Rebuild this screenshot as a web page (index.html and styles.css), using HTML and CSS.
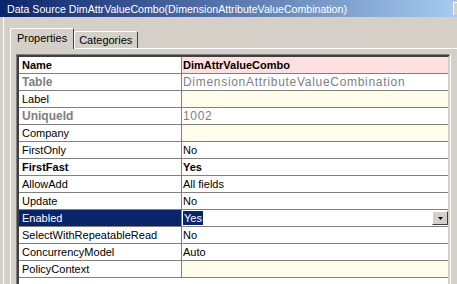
FILE: index.html
```html
<!DOCTYPE html>
<html lang="en">
<head>
    <meta charset="UTF-8">
    <title>Data Source DimAttrValueCombo</title>
    <link rel="stylesheet" href="styles.css">
</head>
<body>
    <div class="window">
        <div class="titlebar">
            <span class="title">Data Source DimAttrValueCombo(DimensionAttributeValueCombination)</span>
            <span class="close">
                <svg width="8" height="7" viewBox="0 0 8 7"><path d="M0 0h2l2 2 2-2h2L5 3.5 8 7H6L4 5 2 7H0l3-3.5z" fill="#000"/></svg>
            </span>
        </div>

        <div class="content">
            <div class="tabs">
                <div class="tab active">Properties</div>
                <div class="tab">Categories</div>
            </div>

            <div class="panel">
                <div class="grid">
                    <div class="row"><div class="name bold">Name</div><div class="value bold pink">DimAttrValueCombo</div></div>
                    <div class="row"><div class="name bold muted">Table</div><div class="value muted">DimensionAttributeValueCombination</div></div>
                    <div class="row"><div class="name">Label</div><div class="value yellow"></div></div>
                    <div class="row"><div class="name bold muted">UniqueId</div><div class="value muted">1002</div></div>
                    <div class="row"><div class="name">Company</div><div class="value yellow"></div></div>
                    <div class="row"><div class="name">FirstOnly</div><div class="value">No</div></div>
                    <div class="row"><div class="name bold">FirstFast</div><div class="value bold">Yes</div></div>
                    <div class="row"><div class="name">AllowAdd</div><div class="value">All fields</div></div>
                    <div class="row"><div class="name">Update</div><div class="value">No</div></div>
                    <div class="row selected">
                        <div class="name">Enabled</div>
                        <div class="value">
                            <span class="sel-text">Yes</span>
                            <span class="drop-btn">
                                <svg width="5" height="3" viewBox="0 0 5 3"><path d="M0 0h5L2.5 3z" fill="#000"/></svg>
                            </span>
                        </div>
                    </div>
                    <div class="row"><div class="name">SelectWithRepeatableRead</div><div class="value">No</div></div>
                    <div class="row"><div class="name">ConcurrencyModel</div><div class="value">Auto</div></div>
                    <div class="row"><div class="name">PolicyContext</div><div class="value yellow"></div></div>
                </div>
            </div>
        </div>
    </div>
</body>
</html>
```

FILE: styles.css
```css
body {
    margin: 0;
    padding: 0;
    font-family: "Liberation Sans", Arial, sans-serif;
}

.window {
    width: 457px;
    height: 284px;
    background-color: #d4d0c8;
    overflow: hidden;
}

.titlebar {
    display: flex;
    align-items: center;
    height: 17px;
    background: linear-gradient(to right, #0a246a, #a6caf0);
    color: #ffffff;
    font-size: 10.6px;
    padding-left: 7px;
}

.title {
    flex: 1;
    white-space: nowrap;
}

.close {
    display: flex;
    align-items: center;
    justify-content: center;
    flex-shrink: 0;
    width: 16px;
    height: 13px;
    margin-right: -12px;
    box-sizing: border-box;
    background-color: #d4d0c8;
    border-top: 1px solid #ffffff;
    border-left: 1px solid #ffffff;
}

.content {
    margin-left: 3px;
    border-left: 1px solid #ffffff;
    padding: 11px 0 0 6px;
    height: 267px;
    box-sizing: border-box;
}

.tabs {
    display: flex;
    align-items: flex-end;
    height: 20px;
}

.tab {
    box-sizing: border-box;
    height: 17px;
    padding: 0 5px 0 4px;
    font-size: 11px;
    line-height: 17px;
    border-top: 1px solid #ffffff;
    border-left: 1px solid #ffffff;
    border-right: 1px solid #404040;
    border-radius: 2px 2px 0 0;
    color: #000000;
}

.tab.active {
    height: 21px;
    margin-bottom: -1px;
    padding: 1px 6px 0 6px;
    background-color: #d4d0c8;
    position: relative;
    z-index: 1;
}

.panel {
    border-top: 1px solid #ffffff;
    border-left: 1px solid #ffffff;
    padding: 6px 0 0 6px;
}

.grid {
    width: 433px;
    height: 240px;
    box-sizing: border-box;
    background-color: #ffffff;
    border-top: 2px solid #404040;
    border-left: 2px solid #404040;
    border-right: 2px solid #d4d0c8;
    box-shadow: -1px -1px 0 #808080, 1px 0 0 #ffffff;
    font-size: 11px;
    color: #000000;
}

.row {
    display: grid;
    grid-template-columns: 163px 266px;
    height: 17px;
    box-sizing: border-box;
    border-bottom: 1px solid #808080;
    line-height: 16px;
}

.name {
    border-right: 1px solid #808080;
    padding-left: 3px;
    white-space: nowrap;
}

.value {
    display: flex;
    align-items: center;
    padding-left: 1px;
    white-space: nowrap;
}

.bold {
    font-weight: bold;
}

.muted {
    color: #808080;
}

.name.muted {
    font-size: 12px;
}

.value.muted {
    font-size: 12px;
    letter-spacing: 0.7px;
}

.pink {
    background-color: #ffe0e0;
}

.yellow {
    background-color: #fffde9;
}

.selected .name {
    background-color: #0a246a;
    color: #ffffff;
}

.sel-text {
    background-color: #0a246a;
    color: #ffffff;
    padding: 0 1px;
    line-height: 14px;
}

.drop-btn {
    display: flex;
    align-items: center;
    justify-content: center;
    margin-left: auto;
    width: 16px;
    height: 14px;
    box-sizing: border-box;
    background-color: #d4d0c8;
    border-top: 1px solid #ffffff;
    border-left: 1px solid #ffffff;
    border-right: 1px solid #404040;
    border-bottom: 1px solid #404040;
}
```
